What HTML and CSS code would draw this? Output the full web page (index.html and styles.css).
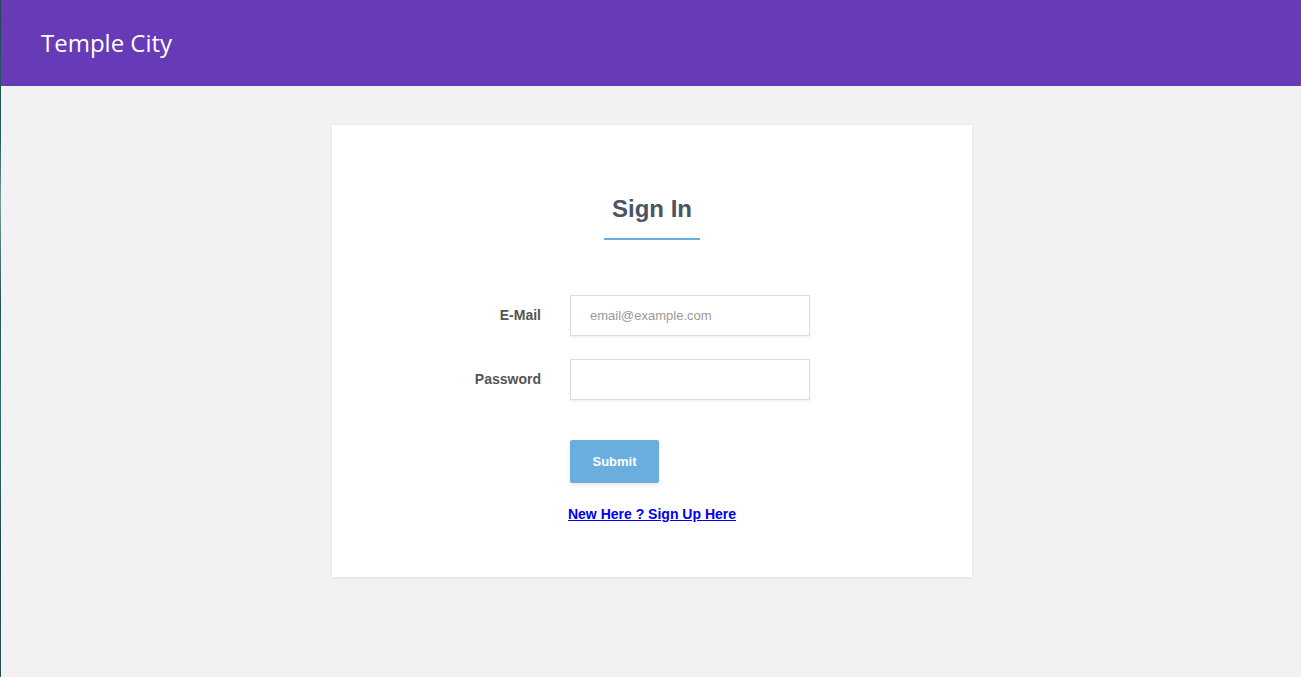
FILE: index.html
```html
<!DOCTYPE html>
<html lang="en">
<head>
    <meta charset="UTF-8">
    <meta name="viewport" content="width=device-width, initial-scale=1.0">
    <title>Temple City - Sign In</title>
    <link rel="stylesheet" href="styles.css">
</head>
<body>
    <header class="topbar">
        <span class="brand">Temple City</span>
    </header>

    <main class="page">
        <div class="card">
            <div class="card-head">
                <h2>Sign In</h2>
            </div>

            <form class="signin-form" onsubmit="return false;">
                <div class="field">
                    <label for="email">E-Mail</label>
                    <input type="email" id="email" placeholder="email@example.com">
                </div>
                <div class="field">
                    <label for="password">Password</label>
                    <input type="password" id="password">
                </div>
                <div class="field actions">
                    <span class="spacer"></span>
                    <button type="submit">Submit</button>
                </div>
            </form>

            <p class="signup"><a href="#">New Here ? Sign Up Here</a></p>
        </div>
    </main>
</body>
</html>
```

FILE: styles.css
```css
:root {
    --purple: #673ab7;
    --page-bg: #f2f2f2;
    --blue: #6aaee0;
    --title: #485662;
    --label: #555555;
    --white: #ffffff;
}

* {
    margin: 0;
    padding: 0;
    box-sizing: border-box;
}

body {
    min-height: 100vh;
    background: var(--page-bg);
    font-family: 'Liberation Sans', Arial, sans-serif;
    border-left: 1px solid #1f4f55;
    border-image: linear-gradient(#234a50 0%, #1d5a5e 20%, #6f9c9c 30%, #1e5358 45%, #2a6e70 60%, #1c4a50 80%, #264d55 100%) 1;
}

.topbar {
    height: 86px;
    background: var(--purple);
    display: flex;
    align-items: center;
    padding-left: 40px;
}

.brand {
    font-family: 'Open Sans', sans-serif;
    font-size: 24px;
    color: var(--white);
    padding-bottom: 2px;
}

.page {
    display: flex;
    justify-content: center;
    padding-top: 39px;
    padding-left: 2px;
}

.card {
    width: 640px;
    background: var(--white);
    padding: 70px 0 55px;
    box-shadow: 0 1px 3px rgba(0, 0, 0, 0.08);
}

.card-head {
    text-align: center;
}

h2 {
    display: inline-block;
    font-size: 24px;
    line-height: 28px;
    font-weight: 700;
    color: var(--title);
    padding: 0 8px 15px;
    border-bottom: 2px solid var(--blue);
}

.signin-form {
    margin-top: 55px;
    display: flex;
    flex-direction: column;
    gap: 23px;
}

.field {
    display: flex;
    align-items: center;
}

.field label,
.field .spacer {
    width: 238px;
    padding-right: 29px;
    padding-bottom: 2px;
    text-align: right;
    font-size: 14px;
    font-weight: 700;
    color: var(--label);
}

.field input {
    width: 240px;
    height: 41px;
    padding: 0 19px;
    border: 1px solid #dcdcdc;
    box-shadow: 0 1px 2px rgba(0, 0, 0, 0.08);
    font-family: 'Liberation Sans', Arial, sans-serif;
    font-size: 13px;
    color: #333;
    outline: none;
}

.field input::placeholder {
    color: #9a9a9a;
}

.field input:focus {
    border-color: var(--blue);
}

.actions {
    margin-top: 17px;
}

button {
    width: 89px;
    height: 43px;
    background: var(--blue);
    color: var(--white);
    border: none;
    border-radius: 2px;
    font-family: 'Liberation Sans', Arial, sans-serif;
    font-size: 13px;
    font-weight: 700;
    cursor: pointer;
    box-shadow: 0 2px 4px rgba(0, 0, 0, 0.1);
}

.signup {
    margin-top: 23px;
    text-align: center;
    font-size: 14px;
    line-height: 16px;
    font-weight: 700;
}

.signup a {
    color: #0000ee;
}
```
